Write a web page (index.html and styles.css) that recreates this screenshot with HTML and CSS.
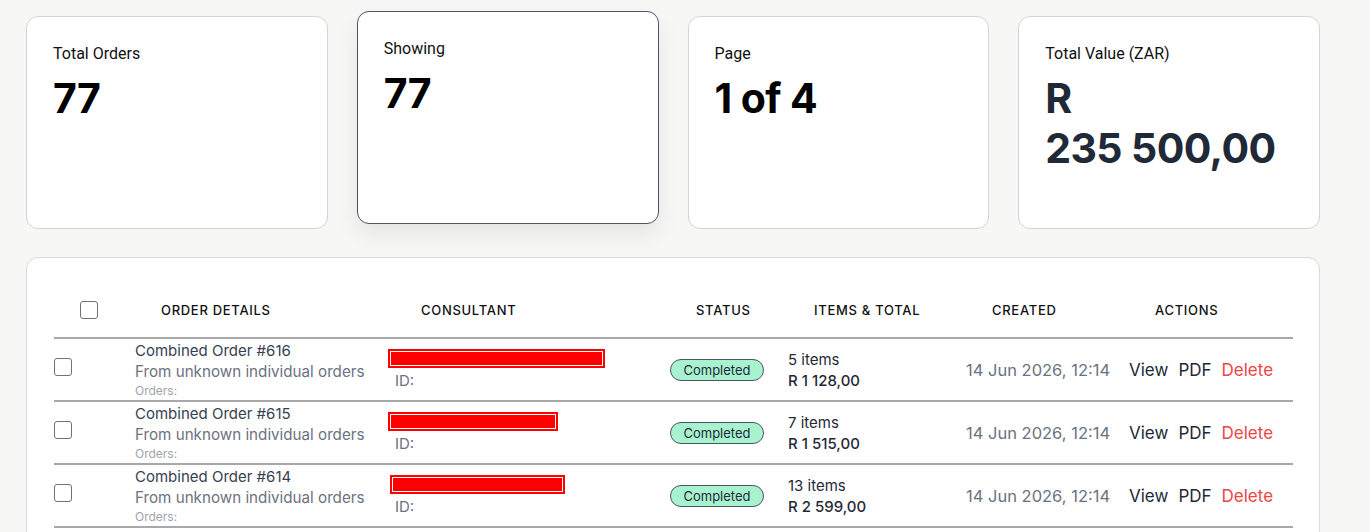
FILE: index.html
```html
<!DOCTYPE html>
<html lang="en">
<head>
  <meta charset="UTF-8" />
  <meta name="viewport" content="width=device-width, initial-scale=1.0" />
  <title>Combined Orders</title>
  <link rel="stylesheet" href="styles.css">
</head>
<body>
  <div class="page">
    <!-- summary cards -->
    <div class="stats">
      <div class="stat-card">
        <div class="stat-label">Total Orders</div>
        <div class="stat-value">77</div>
      </div>
      <div class="stat-card is-hover">
        <div class="stat-label">Showing</div>
        <div class="stat-value">77</div>
      </div>
      <div class="stat-card">
        <div class="stat-label">Page</div>
        <div class="stat-value">1 of 4</div>
      </div>
      <div class="stat-card">
        <div class="stat-label">Total Value (ZAR)</div>
        <div class="stat-value money">R 235&nbsp;500,00</div>
      </div>
    </div>

    <!-- orders table -->
    <div class="panel">
      <div class="orders">
        <div class="orders-head">
          <div class="th"><span class="check"></span></div>
          <div class="th">Order Details</div>
          <div class="th th-consultant">Consultant</div>
          <div class="th">Status</div>
          <div class="th">Items &amp; Total</div>
          <div class="th">Created</div>
          <div class="th">Actions</div>
        </div>

        <div class="order-row">
          <div class="td"><span class="check row-check"></span></div>
          <div class="td details">
            <div class="title">Combined Order #616</div>
            <div class="sub">From unknown individual orders</div>
            <div class="meta">Orders:</div>
          </div>
          <div class="td consultant">
            <div class="redact" style="width: 217px"><span></span></div>
            <div class="cid">ID:</div>
          </div>
          <div class="td"><span class="badge">Completed</span></div>
          <div class="td items">
            <div>5 items</div>
            <div class="amount">R 1 128,00</div>
          </div>
          <div class="td created">14 Jun 2026, 12:14</div>
          <div class="td actions">
            <a>View</a><a>PDF</a><a class="danger">Delete</a>
          </div>
        </div>

        <div class="order-row">
          <div class="td"><span class="check row-check"></span></div>
          <div class="td details">
            <div class="title">Combined Order #615</div>
            <div class="sub">From unknown individual orders</div>
            <div class="meta">Orders:</div>
          </div>
          <div class="td consultant">
            <div class="redact" style="width: 170px"><span></span></div>
            <div class="cid">ID:</div>
          </div>
          <div class="td"><span class="badge">Completed</span></div>
          <div class="td items">
            <div>7 items</div>
            <div class="amount">R 1 515,00</div>
          </div>
          <div class="td created">14 Jun 2026, 12:14</div>
          <div class="td actions">
            <a>View</a><a>PDF</a><a class="danger">Delete</a>
          </div>
        </div>

        <div class="order-row">
          <div class="td"><span class="check row-check"></span></div>
          <div class="td details">
            <div class="title">Combined Order #614</div>
            <div class="sub">From unknown individual orders</div>
            <div class="meta">Orders:</div>
          </div>
          <div class="td consultant">
            <div class="redact" style="width: 175px; margin-left: 2px"><span></span></div>
            <div class="cid">ID:</div>
          </div>
          <div class="td"><span class="badge">Completed</span></div>
          <div class="td items">
            <div>13 items</div>
            <div class="amount">R 2 599,00</div>
          </div>
          <div class="td created">14 Jun 2026, 12:14</div>
          <div class="td actions">
            <a>View</a><a>PDF</a><a class="danger">Delete</a>
          </div>
        </div>
      </div>
    </div>
  </div>
</body>
</html>
```

FILE: styles.css
```css
* { box-sizing: border-box; }

body {
  margin: 0;
  background: #f7f7f5;
  font-family: 'Inter', 'Liberation Sans', sans-serif;
  color: #1f2937;
  overflow: hidden;
}

.page {
  width: 1294px;
  margin-left: 26px;
  padding-top: 16px;
}

/* summary cards */
.stats {
  display: grid;
  grid-template-columns: repeat(4, 1fr);
  gap: 29px;
}

.stat-card {
  height: 213px;
  background: #fff;
  border: 1px solid #d4d4d4;
  border-radius: 12px;
  padding: 27px 26px;
}

.stat-card.is-hover {
  transform: translateY(-5px);
  border-color: #4b5563;
  box-shadow: 0 10px 22px rgba(0, 0, 0, 0.08);
}

.stat-label {
  font-family: 'Roboto', 'Liberation Sans', sans-serif;
  font-size: 16px;
  line-height: 20px;
  color: #111;
}

.stat-value {
  margin-top: 9px;
  font-size: 41px;
  line-height: 50px;
  font-weight: 700;
  color: #000;
  letter-spacing: -0.6px;
}

.stat-value.money {
  color: #1f2937;
}

/* orders panel */
.panel {
  margin-top: 28px;
  background: #fff;
  border: 1px solid #d9d9d9;
  border-radius: 12px;
  padding: 24px 26px 30px 27px;
  height: 320px;
}

.orders-head,
.order-row {
  display: grid;
  grid-template-columns: 81px 253px 282px 118px 178px 163px 164px;
  align-items: center;
}

.orders-head {
  height: 57px;
  border-bottom: 2px solid #a8a8a8;
}

.th {
  padding-left: 26px;
  font-size: 13px;
  font-weight: 500;
  letter-spacing: 0.7px;
  text-transform: uppercase;
  color: #111;
}

.th-consultant { padding-left: 33px; }

.check {
  display: block;
  width: 18px;
  height: 18px;
  border: 1.5px solid #6b7280;
  border-radius: 3px;
  background: #fff;
}

.row-check { margin-bottom: 7px; }

.order-row {
  height: 63px;
  border-bottom: 2px solid #a8a8a8;
  padding-top: 1px;
}

.details .title {
  font-size: 15px;
  line-height: 20px;
  color: #374151;
}

.details .sub {
  font-size: 15.2px;
  line-height: 22px;
  color: #6b7280;
}

.details .meta {
  font-size: 12px;
  line-height: 16px;
  color: #9ca3af;
}

.redact {
  height: 19px;
  border: 2px solid #f00;
  padding: 1px;
  background: #fff;
}

.redact span {
  display: block;
  height: 100%;
  background: #f00;
}

.cid {
  margin-top: 3px;
  padding-left: 7px;
  font-size: 15px;
  line-height: 20px;
  color: #6b7280;
}

.badge {
  display: inline-block;
  width: 94px;
  height: 22px;
  line-height: 20px;
  text-align: center;
  font-size: 13px;
  color: #1f2937;
  background: #a7f3d0;
  border: 1px solid #4b5563;
  border-radius: 999px;
}

.items {
  font-size: 15px;
  line-height: 21px;
  color: #1f2937;
}

.items .amount { font-weight: 500; }

.created {
  font-size: 16.5px;
  color: #6b7280;
}

.actions {
  display: flex;
  gap: 10px;
  font-size: 17px;
  color: #1f2937;
}

.actions a { cursor: pointer; }

.actions .danger { color: #ef4444; }
```
